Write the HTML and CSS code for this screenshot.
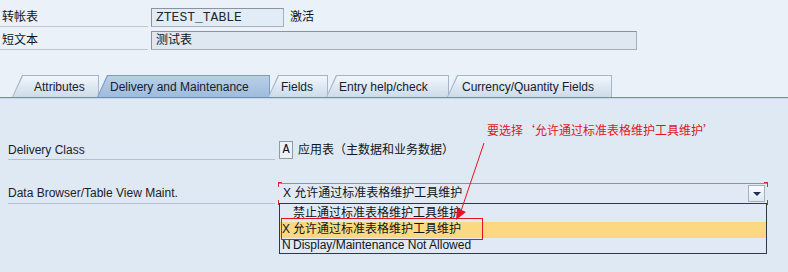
FILE: index.html
```html
<!DOCTYPE html>
<html lang="zh-CN">
<head>
    <meta charset="utf-8">
    <title>转帐表 ZTEST_TABLE</title>
    <link rel="stylesheet" href="styles.css">
</head>
<body>
    <div class="header">
        <div class="row">
            <div class="label">转帐表</div>
            <div class="field mono name">ZTEST_TABLE</div>
            <div class="status">激活</div>
        </div>
        <div class="row second">
            <div class="label">短文本</div>
            <div class="field desc">测试表</div>
        </div>

        <div class="tabs">
            <div class="tab t-attr"><span>Attributes</span></div>
            <div class="tab t-deliv active"><span>Delivery and Maintenance</span></div>
            <div class="tab t-fields"><span>Fields</span></div>
            <div class="tab t-entry"><span>Entry help/check</span></div>
            <div class="tab t-curr"><span>Currency/Quantity Fields</span></div>
        </div>
    </div>

    <div class="main">
        <div class="mrow">
            <div class="mlabel">Delivery Class</div>
            <div class="keybox mono">A</div>
            <div class="keytext">应用表（主数据和业务数据）</div>
        </div>
        <div class="mrow browse">
            <div class="mlabel">Data Browser/Table View Maint.</div>
            <div class="combo">
                <div class="combo-value">X 允许通过标准表格维护工具维护</div>
                <div class="combo-btn"><i></i></div>
                <b class="corner tl"></b><b class="corner bl"></b>
                <b class="corner tr"></b><b class="corner br"></b>

                <div class="list">
                    <div class="item"><span class="key"></span>禁止通过标准表格维护工具维护</div>
                    <div class="item selected"><span class="key">X</span>允许通过标准表格维护工具维护</div>
                    <div class="item"><span class="key">N</span>Display/Maintenance Not Allowed</div>
                </div>
            </div>
        </div>
    </div>

    <!-- annotation drawn over the screen -->
    <div class="note">要选择<span class="q">‘</span>允许通过标准表格维护工具维护<span class="q">’</span></div>
    <div class="mark"></div>
    <svg class="arrow" width="788" height="272" viewBox="0 0 788 272">
        <line x1="484" y1="143" x2="461" y2="211" stroke="#e3141c" stroke-width="1"/>
        <polygon points="456,220 457,208 466,212" fill="#e3141c"/>
    </svg>
</body>
</html>
```

FILE: styles.css
```css
html,
body {
    margin: 0;
    padding: 0;
}

body {
    position: relative;
    width: 788px;
    height: 272px;
    overflow: hidden;
    background: #dfe9f4;
    color: #101418;
    font-family: "Liberation Sans", "Noto Sans CJK SC", sans-serif;
    font-size: 12px;
}

.mono {
    font-family: "Liberation Mono", "Noto Sans CJK SC", monospace;
}

/* header block */

.header {
    background: #eaf1f8;
    padding-top: 8px;
    border-bottom: 1px solid #6f8fb7;
}

.row {
    display: flex;
    height: 19px;
}

.row.second {
    margin-top: 4px;
}

.label {
    width: 146px;
    padding-left: 2px;
    line-height: 19px;
    border-bottom: 1px solid #bcc7d2;
}

.field {
    margin-left: 3px;
    box-sizing: border-box;
    border: 1px solid #a7b0b9;
    border-top-color: #8b949d;
    border-left-color: #8b949d;
    padding-left: 4px;
    line-height: 17px;
}

.field.name {
    width: 133px;
    background: #e2ecf7;
    font-size: 13px;
    color: #24282c;
}

.field.desc {
    width: 486px;
    background: #dfe7f0;
}

.status {
    margin-left: 6px;
    line-height: 19px;
}

/* tab strip */

.tabs {
    display: flex;
    height: 22px;
    margin-top: 25px;
    padding-left: 12px;
}

.tab {
    box-sizing: border-box;
    height: 22px;
    margin-right: -2px;
    padding: 1px 1px 0 1px;
    background: #a3b6cc;
    clip-path: polygon(10px 0, 100% 0, 100% 100%, 0 100%);
}

.tab span {
    display: block;
    height: 100%;
    padding-left: 18px;
    line-height: 22px;
    color: #15202c;
    background: linear-gradient(#f1f6fb, #cddbea);
    clip-path: polygon(10px 0, 100% 0, 100% 100%, 0 100%);
}

.tab.active {
    background: #7f9cc0;
}

.tab.active span {
    background: linear-gradient(#b9cfe7, #9ebcdd);
}

.t-attr { width: 87px; }
.t-attr span { padding-left: 21px; }
.t-deliv { width: 173px; }
.t-deliv span { padding-left: 12px; }
.t-fields { width: 60px; }
.t-fields span { padding-left: 12px; }
.t-entry { width: 123px; }
.t-entry span { padding-left: 12px; }
.t-curr { width: 165px; }
.t-curr span { padding-left: 14px; }

/* main area */

.main {
    border-top: 1px solid #c9d7e6;
    padding: 42px 0 0 8px;
}

.mrow {
    display: flex;
    height: 19px;
}

.mrow.browse {
    margin-top: 23px;
    height: 21px;
}

.mlabel {
    width: 267px;
    margin-right: 4px;
    line-height: 19px;
    border-bottom: 1px solid #b4c0cc;
    color: #1a2028;
}

.browse .mlabel {
    line-height: 20px;
    height: 20px;
}

.keybox {
    box-sizing: border-box;
    width: 14px;
    height: 18px;
    border: 1px solid #8f9aa5;
    background: #edf2f8;
    text-align: center;
    line-height: 16px;
    font-size: 12px;
}

.keytext {
    margin-left: 5px;
    line-height: 18px;
}

/* dropdown */

.combo {
    position: relative;
    box-sizing: border-box;
    width: 488px;
    height: 21px;
    border-top: 1px solid #8a939c;
    border-bottom: 1px solid #8a939c;
    background: #e1eaf4;
}

.combo-value {
    padding-left: 4px;
    line-height: 19px;
}

.combo-btn {
    position: absolute;
    right: 2px;
    top: 1px;
    box-sizing: border-box;
    width: 17px;
    height: 17px;
    border: 1px solid #a4b0bd;
    background: linear-gradient(#fbfdff, #dde7f2);
}

.combo-btn i {
    position: absolute;
    left: 4px;
    top: 6px;
    border-left: 4px solid transparent;
    border-right: 4px solid transparent;
    border-top: 4px solid #1d2d55;
}

.corner {
    position: absolute;
    width: 3px;
    height: 4px;
    border-color: #d42a32;
    border-style: solid;
    border-width: 0;
}

.corner.tl { left: -1px; top: -2px; border-left-width: 1px; border-top-width: 1px; }
.corner.bl { left: -1px; bottom: -2px; border-left-width: 1px; border-bottom-width: 1px; }
.corner.tr { right: -1px; top: -2px; border-right-width: 1px; border-top-width: 1px; }
.corner.br { right: -1px; bottom: -2px; border-right-width: 1px; border-bottom-width: 1px; }

.list {
    position: absolute;
    left: 0;
    top: 19px;
    box-sizing: border-box;
    width: 488px;
    height: 51px;
    padding-top: 2px;
    border: 1px solid #303a46;
    background: #e1eaf4;
}

.item {
    height: 16px;
    line-height: 15px;
    padding-left: 2px;
    white-space: nowrap;
}

.item.selected {
    background: #fbd982;
}

.item .key {
    display: inline-block;
    width: 11px;
}

/* annotation overlay */

.note {
    position: absolute;
    left: 487px;
    top: 122px;
    color: #e3141c;
    font-size: 12px;
    line-height: 16px;
    white-space: nowrap;
}

.note .q {
    font-family: "Noto Sans CJK SC", sans-serif;
}

.mark {
    position: absolute;
    left: 281px;
    top: 218px;
    width: 200px;
    height: 20px;
    border: 1px solid #e3141c;
}

.arrow {
    position: absolute;
    left: 0;
    top: 0;
    pointer-events: none;
}
```
